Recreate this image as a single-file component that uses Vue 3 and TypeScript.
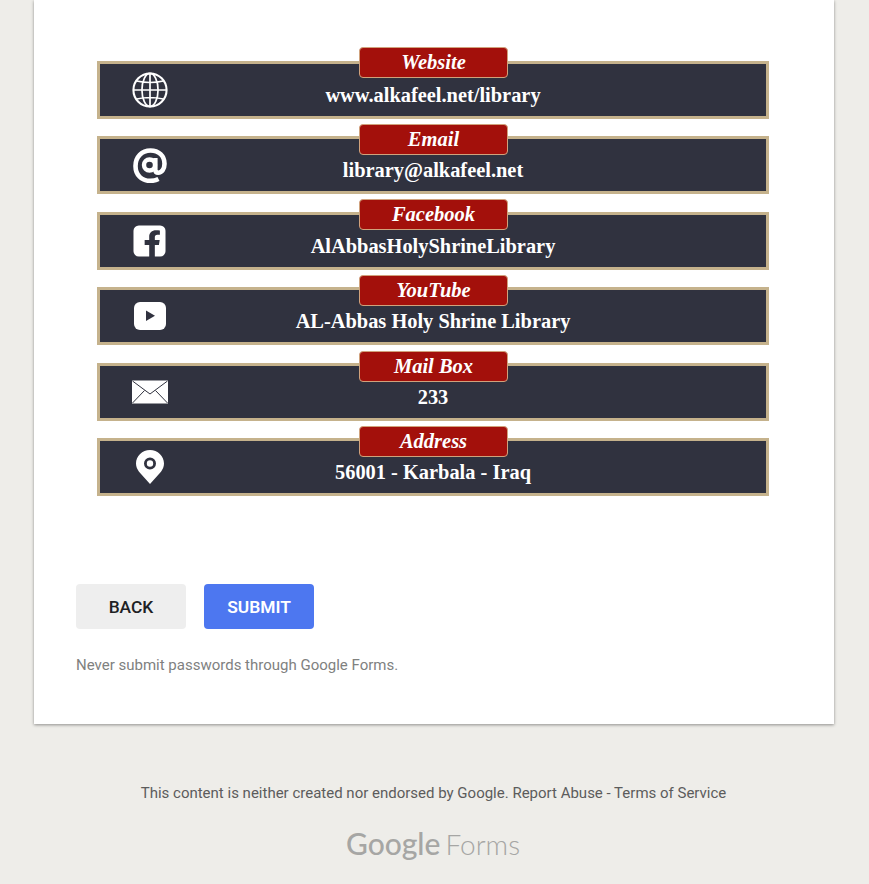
<script setup lang="ts">
type IconName = 'globe' | 'at' | 'facebook' | 'youtube' | 'mail' | 'pin';

// the tags do not sit at quite the same height on every band
const contacts: { label: string; value: string; icon: IconName; tagTop: number }[] = [
  { label: 'Website', value: 'www.alkafeel.net/library', icon: 'globe', tagTop: -17 },
  { label: 'Email', value: 'library@alkafeel.net', icon: 'at', tagTop: -15 },
  { label: 'Facebook', value: 'AlAbbasHolyShrineLibrary', icon: 'facebook', tagTop: -16 },
  { label: 'YouTube', value: 'AL-Abbas Holy Shrine Library', icon: 'youtube', tagTop: -15 },
  { label: 'Mail Box', value: '233', icon: 'mail', tagTop: -15 },
  { label: 'Address', value: '56001 - Karbala - Iraq', icon: 'pin', tagTop: -15 },
];
</script>

<template>
  <div class="page">
    <main class="card">
      <ul class="contacts">
        <li v-for="item in contacts" :key="item.label" class="band">
          <span class="tag" :style="{ top: `${item.tagTop}px` }">{{ item.label }}</span>
          <span class="icon">
            <svg v-if="item.icon === 'globe'" width="36" height="36" viewBox="0 0 38 38" fill="none" stroke="#fff" stroke-width="1.8">
              <circle cx="19" cy="19" r="17.500" stroke-width="2.200" />
              <ellipse cx="19" cy="19" rx="8.500" ry="17.500" />
              <path d="M19 2v34M2 19h34M5 9.500c8 1.800 20 1.800 28 0M5 28.500c8-1.800 20-1.800 28 0" />
            </svg>
            <svg v-else-if="item.icon === 'at'" class="icon-at" width="34" height="35" viewBox="0 0 34 35" fill="none" stroke="#fff">
              <path d="M25.500 31c-2.600 1.300-5.300 1.900-8.300 1.900C8.500 32.900 2.500 26.800 2.500 18 2.500 9 8.800 2.500 17.500 2.500c8.300 0 14 5.400 14 13.200 0 5.300-2.700 9-6.300 9-1.800 0-2.800-1-2.800-2.700" stroke-width="4.600" />
              <circle cx="16.500" cy="17" r="5.500" stroke-width="4.400" />
              <path d="M22.400 10v13" stroke-width="4.400" />
            </svg>
            <svg v-else-if="item.icon === 'facebook'" class="icon-fb" width="33" height="32" viewBox="0 0 34 32">
              <path fill="#fff" d="M6 0h22a5.500 5.500 0 0 1 5.500 5.500v21A5.500 5.500 0 0 1 28 32h-5.500V20h4.200l.8-5h-5v-3c0-1.600.7-2.500 2.600-2.500h2.600V5.100c-1-.2-2.500-.3-4-.3-4.200 0-7 2.500-7 6.700V15H12v5h4.700v12H6a5.500 5.500 0 0 1-5.500-5.500v-21A5.500 5.500 0 0 1 6 0z" />
            </svg>
            <svg v-else-if="item.icon === 'youtube'" width="32" height="28" viewBox="0 0 32 28">
              <rect width="32" height="28" rx="6" fill="#fff" />
              <path d="M12 8.500v10.500l9-5.200z" fill="#30323f" />
            </svg>
            <svg v-else-if="item.icon === 'mail'" width="36" height="24" viewBox="0 0 36 24">
              <rect y="0.500" width="36" height="23" fill="#fff" />
              <path d="M0.500 1l17.500 13L35.500 1M0.500 23l12-12.500M35.500 23l-12-12.500" fill="none" stroke="#30323f" stroke-width="1" />
            </svg>
            <svg v-else width="28" height="34" viewBox="0 0 28 34">
              <path fill="#fff" fill-rule="evenodd" d="M14 0c7.700 0 14 6 14 13.600 0 3.200-1.300 5.800-3 8.200L14 34 3 21.800c-1.700-2.400-3-5-3-8.200C0 6 6.300 0 14 0zm0 7.500a6 6 0 1 0 0 12 6 6 0 0 0 0-12zm0 2.800a3.200 3.200 0 1 1 0 6.400 3.200 3.200 0 0 1 0-6.400z" />
            </svg>
          </span>
          <span class="value">{{ item.value }}</span>
        </li>
      </ul>

      <div class="actions">
        <button type="button" class="btn btn-back">BACK</button>
        <button type="button" class="btn btn-submit">SUBMIT</button>
      </div>
      <p class="note">Never submit passwords through Google Forms.</p>
    </main>

    <footer class="footer">
      <p class="legal">This content is neither created nor endorsed by Google. Report Abuse - Terms of Service</p>
      <div class="brand"><span class="brand-google">Google</span><span class="brand-forms">Forms</span></div>
    </footer>
  </div>
</template>

<style>
html,
body {
  margin: 0;
  background: #eeede9;
  overflow: hidden;
}
</style>

<style scoped>
.page {
  width: 869px;
  height: 884px;
  overflow: hidden;
  background: #eeede9;
  font-family: Roboto, "Liberation Sans", sans-serif;
}

.card {
  box-sizing: border-box;
  width: 800px;
  height: 724px;
  margin-left: 34px;
  padding: 61px 42px 0;
  background: #fff;
  box-shadow: 0 1px 3px rgba(0, 0, 0, 0.4);
}

.contacts {
  display: flex;
  flex-direction: column;
  gap: 17.4px;
  margin: 0 0 0 21px;
  padding: 0;
  list-style: none;
}

.band {
  position: relative;
  box-sizing: border-box;
  display: flex;
  align-items: flex-end;
  justify-content: center;
  width: 672px;
  height: 58px;
  padding-bottom: 9px;
  border: 3px solid #c5b28c;
  background: #30323f;
}

.tag {
  position: absolute;
  left: 259px;
  box-sizing: border-box;
  width: 149px;
  height: 31px;
  border: 1px solid #d0a27c;
  border-radius: 4px;
  background: #a3100b;
  color: #fff;
  font: italic 700 20.5px/29px "Liberation Serif", serif;
  text-align: center;
}

.icon {
  position: absolute;
  top: 0;
  bottom: 0;
  left: 14px;
  display: flex;
  align-items: center;
  justify-content: center;
  width: 72px;
}

.icon-at {
  margin-top: 1px;
}

.icon-fb {
  margin-right: 2px;
}

.value {
  color: #fff;
  font: 700 20.4px/24px "Liberation Serif", serif;
  white-space: nowrap;
}

.actions {
  display: flex;
  gap: 18px;
  margin-top: 88px;
}

.btn {
  width: 110px;
  height: 45px;
  padding: 2px 0 0;
  border: 0;
  border-radius: 4px;
  font: 500 17.4px Roboto, sans-serif;
}

.btn-back {
  background: #eeeeee;
  color: #202124;
}

.btn-submit {
  background: #4d77f0;
  color: #fff;
  font-weight: 600;
}

.note {
  margin: 27px 0 0;
  color: #80817f;
  font-size: 15px;
  line-height: 18px;
}

.footer {
  text-align: center;
}

.legal {
  margin: 60px 0 0;
  padding-right: 2px;
  color: #5c5c5c;
  font-size: 15px;
  line-height: 18px;
}

.brand {
  display: flex;
  justify-content: center;
  align-items: baseline;
  gap: 5px;
  margin-top: 23px;
  margin-left: -3px;
  color: #a6a6a4;
  line-height: 36px;
}

.brand-google {
  font: 500 30px/36px Lato, sans-serif;
}

.brand-forms {
  font: 300 28px/36px Lato, sans-serif;
}
</style>
